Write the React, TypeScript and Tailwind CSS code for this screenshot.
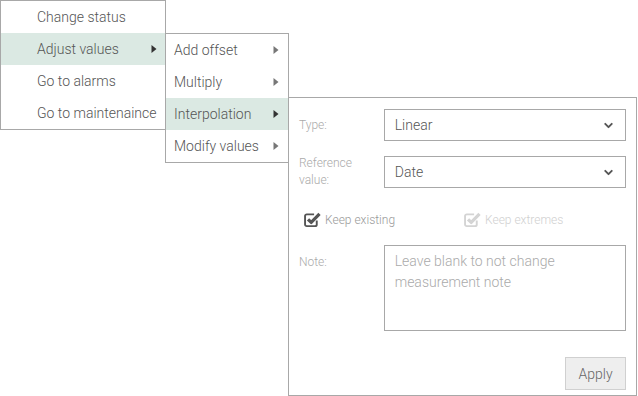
import { ChevronDown } from 'lucide-react';

const font = { fontFamily: 'Roboto, "Noto Sans", sans-serif' };

function Arrow({ dark }: { dark?: boolean }) {
  return (
    <svg width="6" height="10" viewBox="0 0 6 10" className={dark ? 'text-[#333]' : 'text-[#777]'}>
      <path d="M0.5 1 L5.5 5 L0.5 9 Z" fill="currentColor" />
    </svg>
  );
}

function CheckIcon({ disabled }: { disabled?: boolean }) {
  const c = disabled ? '#d4d4d4' : '#555';
  return (
    <svg width="17" height="17" viewBox="0 0 16 16">
      <path
        d="M12 9 V12.6 A1.6 1.6 0 0 1 10.4 14.2 H2.6 A1.6 1.6 0 0 1 1 12.6 V4.8 A1.6 1.6 0 0 1 2.6 3.2 H9.5"
        fill="none"
        stroke={c}
        strokeWidth="1.8"
      />
      <path d="M3.8 7.8 L6.8 10.8 L14.6 2.8" fill="none" stroke={c} strokeWidth="3" strokeLinejoin="round" />
    </svg>
  );
}

function Select({ value }: { value: string }) {
  return (
    <div className="flex h-8 w-[243px] items-center justify-between border border-[#a8a8a8] bg-white pl-[10px] pr-[10px] text-sm text-[#555]">
      <span>{value}</span>
      <ChevronDown size={13} strokeWidth={3.5} className="text-[#555]" />
    </div>
  );
}

const mainItems = ['Change status', 'Adjust values', 'Go to alarms', 'Go to maintenaince'];
const subItems = ['Add offset', 'Multiply', 'Interpolation', 'Modify values'];

export default function App() {
  return (
    <div className="relative h-[396px] w-[638px] overflow-hidden bg-white font-light" style={font}>
      {/* first level menu */}
      <div className="absolute left-0 top-0 w-[166px] border border-[#a8a8a8] bg-white">
        {mainItems.map((item, i) => (
          <div
            key={item}
            className={`flex h-8 items-center justify-between whitespace-nowrap pl-9 pr-[8px] text-sm text-[#555] ${i === 1 ? 'bg-[#dbe9e3]' : ''}`}
          >
            <span>{item}</span>
            {i === 1 && <Arrow dark />}
          </div>
        ))}
      </div>

      {/* second level menu */}
      <div className="absolute left-[165px] top-[33px] w-[124px] border border-[#a8a8a8] bg-white">
        {subItems.map((item, i) => (
          <div
            key={item}
            className={`flex h-8 items-center justify-between whitespace-nowrap pl-2 pr-[9px] text-sm text-[#555] ${i === 2 ? 'bg-[#dbe9e3]' : ''}`}
          >
            <span>{item}</span>
            <Arrow dark={i === 2} />
          </div>
        ))}
      </div>

      {/* interpolation panel */}
      <div className="absolute left-[288px] top-[97px] flex h-[299px] w-[349px] flex-col border border-[#a8a8a8] bg-white px-[10px] pt-[11px] pb-[5px]">
        <div className="flex items-center">
          <div className="w-[85px] text-xs text-[#aaa]">Type:</div>
          <Select value="Linear" />
        </div>
        <div className="mt-[14px] flex items-center">
          <div className="w-[85px] text-xs leading-[17px] text-[#aaa]">
            Reference
            <br />
            value:
          </div>
          <Select value="Date" />
        </div>
        <div className="mt-[22px] flex items-center text-xs">
          <div className="flex w-[165px] items-center gap-[4px] pl-[5px] text-[#999]">
            <CheckIcon />
            <span>Keep existing</span>
          </div>
          <div className="flex items-center gap-[4px] text-[#d0d0d0]">
            <CheckIcon disabled />
            <span>Keep extremes</span>
          </div>
        </div>
        <div className="mt-[17px] flex items-start">
          <div className="w-[85px] pt-[9px] text-xs text-[#aaa]">Note:</div>
          <div className="h-[86px] w-[243px] border border-[#a8a8a8] px-[10px] pt-[5px] text-sm leading-[21px] text-[#aaa]">
            Leave blank to not change measurement note
          </div>
        </div>
        <div className="mt-auto flex justify-end">
          <button className="h-[33px] w-[61px] border border-[#d0d0d0] bg-[#eeeeee] text-sm text-[#666]">
            Apply
          </button>
        </div>
      </div>
    </div>
  );
}
